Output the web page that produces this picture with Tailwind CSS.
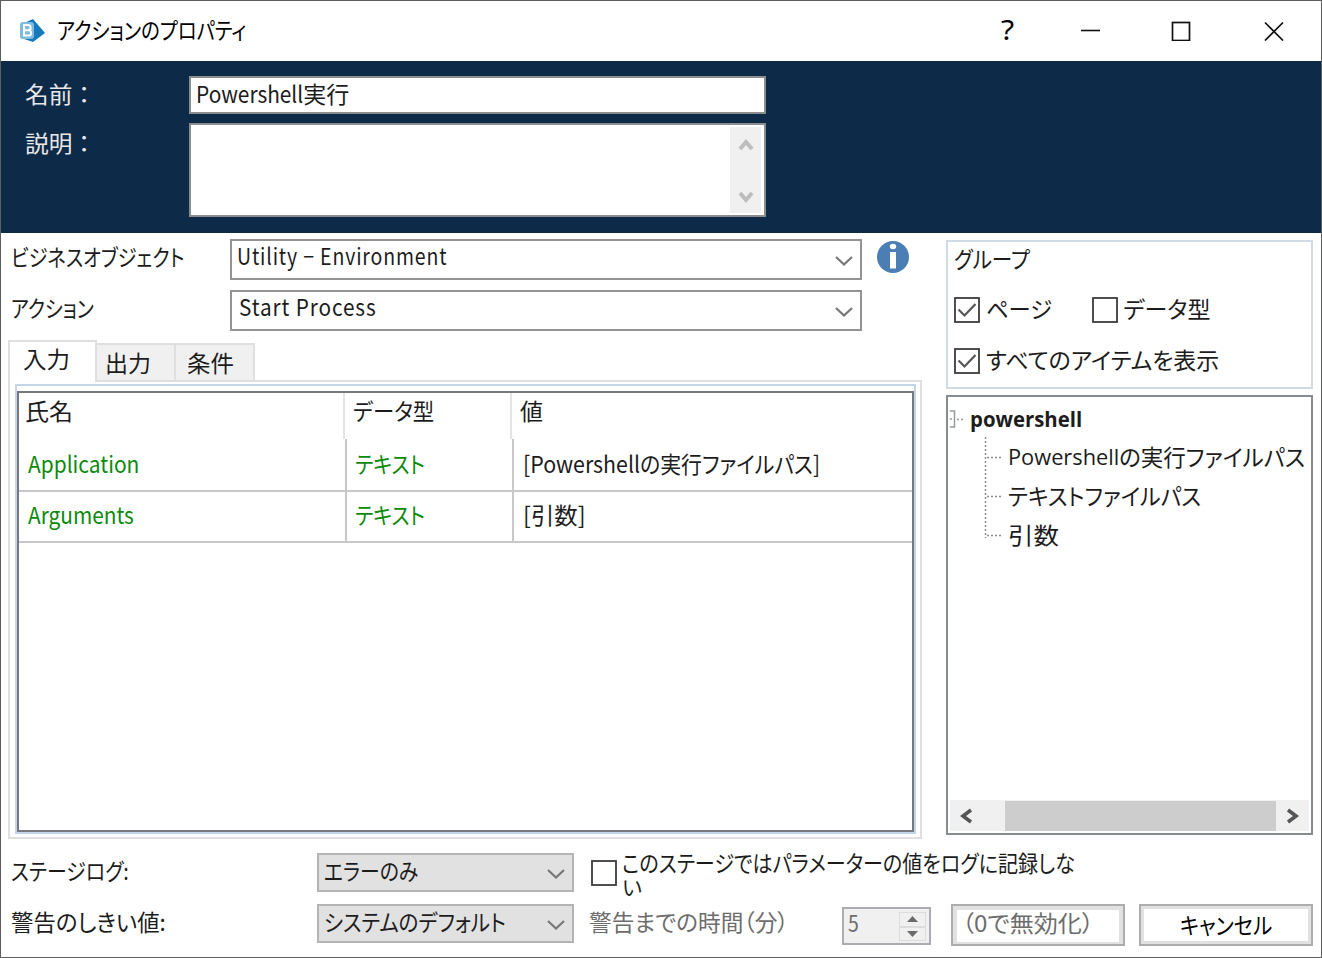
<!DOCTYPE html>
<html lang="ja">
<head>
    <meta charset="UTF-8">
    <meta name="viewport" content="width=device-width, initial-scale=1.0">
    <title>アクションのプロパティ</title>
    <script src="https://cdn.jsdelivr.net/npm/@tailwindcss/browser@4"></script>
</head>
<body class="overflow-hidden bg-white">
    <div class="flex h-[958px] w-[1322px] flex-col border border-[#5e5e5e] bg-white font-['Noto_Sans_CJK_JP',sans-serif] text-[23px] leading-[26px] text-[#1c1c1c] [font-feature-settings:'palt'] [&_svg]:shrink-0">
        <!-- Title bar -->
        <div class="flex h-[60px] shrink-0 items-center justify-between pl-[19px] pr-[37px]">
            <div class="flex items-center">
                <svg class="mr-[11px] h-[24px] w-[26px]" viewBox="0 0 26 24">
                    <path d="M4 4L13 0L25 14L13 23L4 20Z" fill="#1679ba"/>
                    <rect x="0" y="3" width="14" height="17" rx="3" fill="#7dbbe0"/>
                    <path d="M4 6h4a2.6 2.6 0 0 1 0 5.3H4zM4 11.3h4.500a2.600 2.600 0 0 1 0 5.300H4z" fill="none" stroke="#fff" stroke-width="2"/>
                </svg>
                <span data-w="189" class="-mt-[4px] text-black">アクションのプロパティ</span>
            </div>
            <div class="flex items-center">
                <span data-w="13" class="-mt-[4px] font-['Noto_Sans'] text-[28px] text-black">?</span>
                <svg class="ml-[66px] mr-[71px] h-5 w-5" viewBox="0 0 20 20" stroke="#111" stroke-width="1.6"><path d="M1 9.500h19"/></svg>
                <svg class="mr-[73px] h-5 w-5" viewBox="0 0 20 20" fill="none" stroke="#111" stroke-width="1.700"><rect x="1.500" y="1.500" width="17" height="18"/></svg>
                <svg class="h-5 w-5" viewBox="0 0 20 20" stroke="#111" stroke-width="1.700"><path d="M1 1.500l18 18M19 1.500l-18 18"/></svg>
            </div>
        </div>

        <!-- Name / description -->
        <div class="h-[172px] shrink-0 bg-[#0d2a48] pt-[15px]">
            <div class="flex">
                <div class="w-[188px] pl-[24px] pt-[4px] text-[#e8e8e8] [font-feature-settings:normal]"><span data-w="71">名前：</span></div>
                <div class="flex h-[38px] w-[577px] items-center border-2 border-[#8b8d8f] bg-white pb-[4px] pl-[5px]"><span data-w="107">Powershell</span><span data-w="46">実行</span></div>
            </div>
            <div class="mt-[9px] flex">
                <div class="w-[188px] pl-[24px] pt-[6px] text-[#e8e8e8] [font-feature-settings:normal]"><span data-w="71">説明：</span></div>
                <div class="flex h-[94px] w-[577px] justify-end border-2 border-[#8b8d8f] bg-white p-[2px] pr-[3px]">
                    <div class="flex w-[31px] flex-col items-center justify-between bg-[#f0f0f0] pb-[9px] pt-[11px]">
                        <svg class="h-[14px] w-[16px]" viewBox="0 0 16 14" fill="none" stroke="#bdbdbd" stroke-width="4"><path d="M2 11l6-7 6 7"/></svg>
                        <svg class="h-[14px] w-[16px]" viewBox="0 0 16 14" fill="none" stroke="#bdbdbd" stroke-width="4"><path d="M2 3l6 7 6-7"/></svg>
                    </div>
                </div>
            </div>
        </div>

        <!-- Main area -->
        <div class="flex h-[606px] shrink-0">
            <div class="w-[945px] shrink-0 pt-[6px]">
                <div class="flex">
                    <div class="w-[229px] shrink-0 pl-[10px] pt-[4px]"><span data-w="173">ビジネスオブジェクト</span></div>
                    <div class="flex h-[41px] w-[632px] items-center justify-between border-2 border-[#939393] pl-[5px] pr-[7px]">
                        <span data-w="210" class="-mt-[9px] tracking-[1px]">Utility − Environment</span>
                        <svg class="mt-[2px] h-[12px] w-[18px]" viewBox="0 0 18 12" fill="none" stroke="#777" stroke-width="2.200"><path d="M1 2l8 7.500 8-7.500"/></svg>
                    </div>
                    <svg class="ml-[14px] mt-[1px] h-[34px] w-[34px]" viewBox="0 0 34 34">
                        <circle cx="17" cy="17" r="16" fill="#4a7eb5"/>
                        <ellipse cx="17" cy="6.500" rx="3.200" ry="2.700" fill="#fff"/>
                        <rect x="14" y="12" width="6" height="16.500" fill="#fff"/>
                    </svg>
                </div>
                <div class="mt-[10px] flex">
                    <div class="w-[229px] shrink-0 pl-[10px] pt-[4px]"><span data-w="83">アクション</span></div>
                    <div class="flex h-[41px] w-[632px] items-center justify-between border-2 border-[#939393] pl-[7px] pr-[7px]">
                        <span data-w="138" class="-mt-[9px] tracking-[1px]">Start Process</span>
                        <svg class="mt-[2px] h-[12px] w-[18px]" viewBox="0 0 18 12" fill="none" stroke="#777" stroke-width="2.200"><path d="M1 2l8 7.500 8-7.500"/></svg>
                    </div>
                </div>

                <!-- Tabs -->
                <div class="ml-[7px] mt-[9px] flex h-[40px] items-end">
                    <div class="z-10 -mb-[2px] h-[42px] w-[89px] border-2 border-b-0 border-[#dfdfdf] bg-white pl-[13px] pt-[3px]"><span data-w="47">入力</span></div>
                    <div class="h-[37px] w-[79px] border-t-2 border-r-2 border-[#dfdfdf] bg-[#f0f0f0] pl-[8px] pt-[4px]"><span data-w="46">出力</span></div>
                    <div class="h-[37px] w-[79px] border-t-2 border-r-2 border-[#dfdfdf] bg-[#f0f0f0] pl-[11px] pt-[4px]"><span data-w="47">条件</span></div>
                </div>
                <div class="ml-[7px] h-[459px] w-[914px] border-2 border-[#dfdfdf] bg-white px-[5px] pt-[2px]">
                    <div class="h-[450px] w-[901px] border-2 border-[#c3d5e8] pt-[5px]">
                        <div class="h-[441px] w-[897px] border-2 border-[#76787c]">
                            <div class="flex h-[46px]">
                                <div class="w-[326px] shrink-0 border-r-2 border-[#e4e4e4] pl-[6px] pt-[4px]"><span data-w="48">氏名</span></div>
                                <div class="w-[167px] shrink-0 border-r-2 border-[#e4e4e4] pl-[8px] pt-[4px]"><span data-w="81">データ型</span></div>
                                <div class="pl-[8px] pt-[4px]"><span data-w="23">値</span></div>
                            </div>
                            <div class="flex h-[53px] border-b-2 border-[#c8c8c8] text-[#0b8a0b]">
                                <div class="w-[328px] shrink-0 border-r-2 border-[#c8c8c8] pl-[9px] pt-[11px]"><span data-w="111">Application</span></div>
                                <div class="w-[167px] shrink-0 border-r-2 border-[#c8c8c8] pl-[8px] pt-[11px]"><span data-w="70">テキスト</span></div>
                                <div class="flex pl-[9px] pt-[11px] text-[#1c1c1c]"><span data-w="117">[Powershell</span><span data-w="180">の実行ファイルパス]</span></div>
                            </div>
                            <div class="flex h-[51px] border-b-2 border-[#c8c8c8] text-[#0b8a0b]">
                                <div class="w-[328px] shrink-0 border-r-2 border-[#c8c8c8] pl-[9px] pt-[9px]"><span data-w="106">Arguments</span></div>
                                <div class="w-[167px] shrink-0 border-r-2 border-[#c8c8c8] pl-[8px] pt-[9px]"><span data-w="70">テキスト</span></div>
                                <div class="pl-[9px] pt-[9px] text-[#1c1c1c]"><span data-w="63">[引数]</span></div>
                            </div>
                        </div>
                    </div>
                </div>
            </div>

            <div class="w-[367px] shrink-0 pt-[7px]">
                <!-- Group options -->
                <div class="h-[149px] border-2 border-[#cfdce8] pl-[6px] pt-[3px]">
                    <div class="h-[26px]"><span data-w="76">グループ</span></div>
                    <div class="mt-[26px] flex h-[26px] items-center">
                        <svg class="mr-[6px] h-[26px] w-[26px]" viewBox="0 0 26 26" fill="none" stroke="#3c3c3c" stroke-width="1.800"><rect x="1" y="1" width="24" height="24"/><path d="M4.500 12.500l6 6 11-11.500" stroke="#555" stroke-width="2.200"/></svg>
                        <span data-w="66" class="-mt-[4px]">ページ</span>
                        <svg class="ml-[40px] mr-[5px] h-[26px] w-[26px]" viewBox="0 0 26 26" fill="none" stroke="#3c3c3c" stroke-width="1.800"><rect x="1" y="1" width="24" height="24"/></svg>
                        <span data-w="87" class="-mt-[4px]">データ型</span>
                    </div>
                    <div class="mt-[25px] flex h-[26px] items-center">
                        <svg class="mr-[6px] h-[26px] w-[26px]" viewBox="0 0 26 26" fill="none" stroke="#3c3c3c" stroke-width="1.800"><rect x="1" y="1" width="24" height="24"/><path d="M4.500 12.500l6 6 11-11.500" stroke="#555" stroke-width="2.200"/></svg>
                        <span data-w="233" class="-mt-[4px]">すべてのアイテムを表示</span>
                    </div>
                </div>

                <!-- Data tree -->
                <div class="mt-[6px] flex h-[440px] flex-col justify-between border-2 border-[#858a93] p-[2px]">
                    <div class="pt-[3px]">
                        <div class="flex h-[34px] items-center">
                            <svg class="mr-[6px] h-[20px] w-[14px]" viewBox="0 0 14 20" fill="none" stroke="#999" stroke-width="1.500"><path d="M0 2h4.500v16H0M0 10h2"/><path d="M7 10.500h7" stroke-dasharray="2 2"/></svg>
                            <span data-w="112" class="-mt-[2px] font-['Open_Sans'] text-[22px] font-bold">powershell</span>
                        </div>
                        <div class="flex">
                            <svg class="ml-[34px] h-[118px] w-[20px]" viewBox="0 0 20 118" fill="none" stroke="#8c8c8c" stroke-width="1.500" stroke-dasharray="2 2"><path d="M1.500 1v101M3 21.500h16M3 60.500h16M3 99.500h16"/></svg>
                            <div class="ml-[4px] flex flex-col">
                                <div class="flex h-[39px] items-center"><span data-w="111" class="font-['Open_Sans'] text-[22px]">Powershell</span><span data-w="186">の実行ファイルパス</span></div>
                                <div class="flex h-[39px] items-center"><span data-w="193">テキストファイルパス</span></div>
                                <div class="flex h-[39px] items-center"><span data-w="51">引数</span></div>
                            </div>
                        </div>
                    </div>
                    <div class="flex h-[31px] items-center bg-[#f0f0f0] pl-[9px]">
                        <svg class="h-[16px] w-[14px]" viewBox="0 0 14 16" fill="none" stroke="#555" stroke-width="3.600"><path d="M12 2L4 8l8 6"/></svg>
                        <div class="ml-[32px] mr-[10px] h-[30px] w-[271px] bg-[#cdcdcd]"></div>
                        <svg class="h-[16px] w-[14px]" viewBox="0 0 14 16" fill="none" stroke="#555" stroke-width="3.600"><path d="M2 2l8 6-8 6"/></svg>
                    </div>
                </div>
            </div>
        </div>

        <!-- Footer -->
        <div class="pl-[10px] pt-[14px]">
            <div class="flex h-[39px]">
                <div class="w-[306px] shrink-0 pt-[4px]"><span data-w="118">ステージログ:</span></div>
                <div class="flex h-[39px] w-[257px] shrink-0 items-center justify-between border-2 border-[#b4b4b4] bg-[#e1e1e1] pl-[5px] pr-[7px]">
                    <span data-w="94" class="-mt-[5px]">エラーのみ</span>
                    <svg class="mt-[2px] h-[12px] w-[18px]" viewBox="0 0 18 12" fill="none" stroke="#777" stroke-width="2.200"><path d="M1 2l8 7.500 8-7.500"/></svg>
                </div>
                <svg class="ml-[17px] mt-[7px] h-[26px] w-[26px]" viewBox="0 0 26 26" fill="none" stroke="#3c3c3c" stroke-width="1.800"><rect x="1" y="1" width="24" height="24"/></svg>
                <div class="-mt-[2px] ml-[5px] leading-[23px]">
                    <div class="h-[23px]"><span data-w="453">このステージではパラメーターの値をログに記録しな</span></div>
                    <div class="h-[23px]"><span data-w="20" class="text-[21px]">い</span></div>
                </div>
            </div>
            <div class="mt-[12px] flex h-[41px]">
                <div class="w-[306px] shrink-0 pt-[4px]"><span data-w="155">警告のしきい値:</span></div>
                <div class="flex h-[39px] w-[257px] shrink-0 items-center justify-between border-2 border-[#b4b4b4] bg-[#e1e1e1] pl-[5px] pr-[7px]">
                    <span data-w="182" class="-mt-[5px]">システムのデフォルト</span>
                    <svg class="mt-[2px] h-[12px] w-[18px]" viewBox="0 0 18 12" fill="none" stroke="#777" stroke-width="2.200"><path d="M1 2l8 7.500 8-7.500"/></svg>
                </div>
                <div class="w-[268px] shrink-0 pl-[15px] pt-[4px] text-[#6d6d6d]"><span data-w="200">警告までの時間（分）</span></div>
                <div class="mt-[3px] flex h-[38px] w-[89px] shrink-0 justify-between border-2 border-[#abadb3] bg-[#f0f0f0] pl-[4px] pr-[3px] text-[#6d6d6d]">
                    <span data-w="11">5</span>
                    <div class="mt-[3px] flex h-[29px] w-[27px] flex-col border border-[#dcdcdc]">
                        <div class="flex flex-1 items-center justify-center border-b-2 border-[#dcdcdc]"><svg class="h-[6px] w-[11px]" viewBox="0 0 11 6" fill="#6a6a6a"><path d="M0 6L5.500 0 11 6z"/></svg></div>
                        <div class="flex flex-1 items-center justify-center"><svg class="h-[6px] w-[11px]" viewBox="0 0 11 6" fill="#6a6a6a"><path d="M0 0l5.500 6L11 0z"/></svg></div>
                    </div>
                </div>
                <div class="ml-[20px] h-[42px] w-[174px] shrink-0 border-2 border-[#adadad] bg-[#e1e1e1] p-[4px] pb-[2px]">
                    <div class="flex h-full items-start bg-white pl-[5px] text-[#6d6d6d]"><span data-w="132" class="-mt-[1px]">（0で無効化）</span></div>
                </div>
                <div class="ml-[14px] flex h-[42px] w-[174px] shrink-0 border-2 border-[#adadad] bg-[#e1e1e1] p-[3px]">
                    <div class="flex w-full items-center justify-center bg-white text-black"><span data-w="92" class="-mt-[3px]">キャンセル</span></div>
                </div>
            </div>
        </div>
    </div>

    <script>
        // Squeeze each label to its dialog width, like a condensed UI font
        const fitLabel = el => {
            const target = Number(el.dataset.w);
            const natural = el.offsetWidth;
            if (!natural) return;
            el.style.transform = `scaleX(${target / natural})`;
            el.style.marginRight = `${target - natural}px`;
        };

        const observer = new ResizeObserver(entries => {
            entries.forEach(entry => fitLabel(entry.target));
        });

        document.querySelectorAll('[data-w]').forEach(el => {
            el.style.display = 'inline-block';
            el.style.whiteSpace = 'nowrap';
            el.style.flexShrink = '0';
            el.style.transformOrigin = 'left center';
            observer.observe(el);
        });
    </script>
</body>
</html>
